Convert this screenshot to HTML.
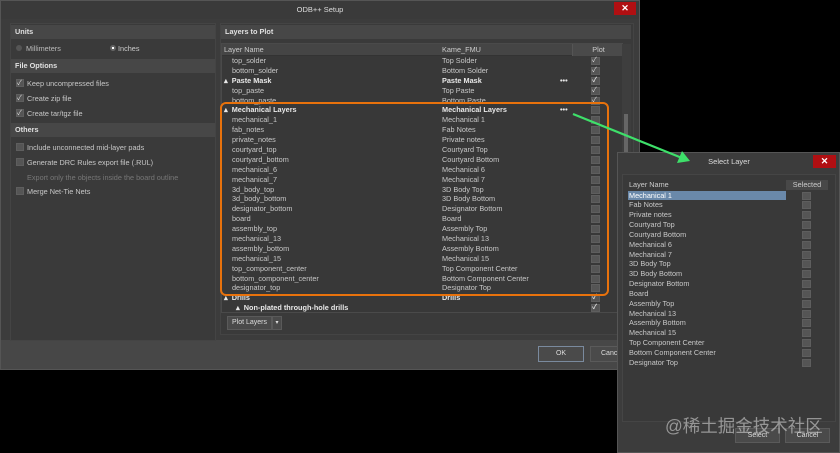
<!DOCTYPE html>
<html><head><meta charset="utf-8"><style>
*{margin:0;padding:0;box-sizing:border-box}
body{width:840px;height:453px;background:#000;position:relative;overflow:hidden;font-family:"Liberation Sans","Noto Sans CJK SC",sans-serif;font-size:7.3px;color:#c8c8c8}
.a{position:absolute}
.hdr{position:absolute;background:#474747;color:#e0e0e0;font-weight:bold;padding-left:4px;line-height:14px;font-size:7.3px}
.cb{position:absolute;width:8px;height:8px;background:#555;border:1px solid #5e5e5e}
.cb.c::after{content:"✓";position:absolute;left:0;top:-2px;font-size:7px;color:#ddd}
.row{height:9.9px;line-height:9.9px;position:relative;white-space:nowrap}
.row span{position:absolute}
.row .l{left:10px}.row .r{left:220px}
.row .k{left:369px;top:1px;width:9px;height:8px;background:#555;border:1px solid #5e5e5e}
.row .k.c::after{content:"✓";position:absolute;left:0;top:-2px;font-size:7px;color:#ddd;line-height:9px}
.b{font-weight:bold;color:#e8e8e8}
.srow{height:9.85px;line-height:9.85px;position:relative;padding-left:7px;white-space:nowrap}
.srow i{position:absolute;left:180px;top:1px;width:9px;height:8px;background:#555;border:1px solid #5e5e5e}
.btn{position:absolute;background:#4a4a4a;border:1px solid #5a5a5a;text-align:center;color:#ddd;font-size:7px}
</style></head><body>
<div class="a" style="left:0;top:0;width:640px;height:370px;background:#3c3c3c;border:1px solid #555"></div>
<div class="a" style="left:1px;top:1px;width:638px;height:18px;background:#3a3a3a;text-align:center;line-height:18px;color:#ddd;font-size:7.5px">ODB++ Setup</div>
<div class="a" style="left:614px;top:2px;width:22px;height:13px;background:#b00f12;color:#fff;text-align:center;line-height:13px;font-weight:bold;font-size:9px">✕</div>
<div class="a" style="left:1px;top:340px;width:638px;height:29px;background:#474747"></div>
<div class="a" style="left:10px;top:23px;width:206px;height:318px;background:#3a3a3a;border:1px solid #444"></div>
<div class="hdr" style="left:11px;top:25px;width:204px">Units</div>
<div class="a" style="left:16px;top:45px;width:6px;height:6px;border-radius:50%;background:#555"></div>
<div class="a" style="left:26px;top:44px;color:#bbb">Millimeters</div>
<div class="a" style="left:110px;top:45px;width:6px;height:6px;border-radius:50%;background:#444;border:2px solid #666"></div>
<div class="a" style="left:112px;top:47px;width:2px;height:2px;background:#fff"></div>
<div class="a" style="left:118px;top:44px;color:#ccc">Inches</div>
<div class="hdr" style="left:11px;top:59px;width:204px">File Options</div>
<div class="cb c" style="left:16px;top:79px"></div><div class="a" style="left:27px;top:79px">Keep uncompressed files</div>
<div class="cb c" style="left:16px;top:94px"></div><div class="a" style="left:27px;top:94px">Create zip file</div>
<div class="cb c" style="left:16px;top:109px"></div><div class="a" style="left:27px;top:109px">Create tar/tgz file</div>
<div class="hdr" style="left:11px;top:123px;width:204px">Others</div>
<div class="cb" style="left:16px;top:143px"></div><div class="a" style="left:27px;top:143px">Include unconnected mid-layer pads</div>
<div class="cb" style="left:16px;top:158px"></div><div class="a" style="left:27px;top:158px">Generate DRC Rules export file (.RUL)</div>
<div class="a" style="left:27px;top:173px;color:#777">Export only the objects inside the board outline</div>
<div class="cb" style="left:16px;top:187px"></div><div class="a" style="left:27px;top:187px">Merge Net-Tie Nets</div>
<div class="a" style="left:220px;top:23px;width:414px;height:312px;background:#3a3a3a;border:1px solid #444"></div>
<div class="hdr" style="left:221px;top:25px;width:410px">Layers to Plot</div>
<div class="a" style="left:221px;top:43px;width:402px;height:270px;background:#383838;border:1px solid #4a4a4a;overflow:hidden">
 <div style="height:12px;background:#454545;position:relative;line-height:12px;color:#ccc;border-bottom:1px solid #333">
  <span class="a" style="left:2px">Layer Name</span><span class="a" style="left:220px">Kame_FMU</span>
  <span class="a" style="left:350px;width:52px;text-align:center;border-left:1px solid #555;background:#4a4a4a">Plot</span>
 </div>
 <div class="row"><span class="l">top_solder</span><span class="r">Top Solder</span><span class="k c"></span></div>
 <div class="row"><span class="l">bottom_solder</span><span class="r">Bottom Solder</span><span class="k c"></span></div>
 <div class="row b"><span class="l" style="left:2px">▴&nbsp; Paste Mask</span><span class="r">Paste Mask</span><span style="left:338px">•••</span><span class="k c"></span></div>
 <div class="row"><span class="l">top_paste</span><span class="r">Top Paste</span><span class="k c"></span></div>
 <div class="row"><span class="l">bottom_paste</span><span class="r">Bottom Paste</span><span class="k c"></span></div>
 <div class="row b"><span class="l" style="left:2px">▴&nbsp; Mechanical Layers</span><span class="r">Mechanical Layers</span><span style="left:338px">•••</span><span class="k"></span></div>
 <div class="row"><span class="l">mechanical_1</span><span class="r">Mechanical 1</span><span class="k"></span></div>
 <div class="row"><span class="l">fab_notes</span><span class="r">Fab Notes</span><span class="k"></span></div>
 <div class="row"><span class="l">private_notes</span><span class="r">Private notes</span><span class="k"></span></div>
 <div class="row"><span class="l">courtyard_top</span><span class="r">Courtyard Top</span><span class="k"></span></div>
 <div class="row"><span class="l">courtyard_bottom</span><span class="r">Courtyard Bottom</span><span class="k"></span></div>
 <div class="row"><span class="l">mechanical_6</span><span class="r">Mechanical 6</span><span class="k"></span></div>
 <div class="row"><span class="l">mechanical_7</span><span class="r">Mechanical 7</span><span class="k"></span></div>
 <div class="row"><span class="l">3d_body_top</span><span class="r">3D Body Top</span><span class="k"></span></div>
 <div class="row"><span class="l">3d_body_bottom</span><span class="r">3D Body Bottom</span><span class="k"></span></div>
 <div class="row"><span class="l">designator_bottom</span><span class="r">Designator Bottom</span><span class="k"></span></div>
 <div class="row"><span class="l">board</span><span class="r">Board</span><span class="k"></span></div>
 <div class="row"><span class="l">assembly_top</span><span class="r">Assembly Top</span><span class="k"></span></div>
 <div class="row"><span class="l">mechanical_13</span><span class="r">Mechanical 13</span><span class="k"></span></div>
 <div class="row"><span class="l">assembly_bottom</span><span class="r">Assembly Bottom</span><span class="k"></span></div>
 <div class="row"><span class="l">mechanical_15</span><span class="r">Mechanical 15</span><span class="k"></span></div>
 <div class="row"><span class="l">top_component_center</span><span class="r">Top Component Center</span><span class="k"></span></div>
 <div class="row"><span class="l">bottom_component_center</span><span class="r">Bottom Component Center</span><span class="k"></span></div>
 <div class="row"><span class="l">designator_top</span><span class="r">Designator Top</span><span class="k"></span></div>
 <div class="row b"><span class="l" style="left:2px">▴&nbsp; Drills</span><span class="r">Drills</span><span class="k c"></span></div>
 <div class="row b"><span class="l" style="left:14px">▴&nbsp; Non-plated through-hole drills</span><span class="k c"></span></div>
</div>
<div class="a" style="left:622px;top:44px;width:9px;height:268px;background:#3e3e3e"></div>
<div class="a" style="left:624px;top:114px;width:4px;height:40px;background:#666"></div>
<div class="btn" style="left:227px;top:316px;width:45px;height:14px;line-height:12px">Plot Layers</div>
<div class="btn" style="left:272px;top:316px;width:10px;height:14px;line-height:12px;font-size:6px">▾</div>
<div class="btn" style="left:538px;top:346px;width:46px;height:16px;line-height:14px;border-color:#7a8a9e">OK</div>
<div class="btn" style="left:590px;top:346px;width:46px;height:16px;line-height:14px;text-align:left;padding-left:10px;overflow:hidden">Cancel</div>
<div class="a" style="left:220px;top:102px;width:389px;height:194px;border:2.5px solid #e8720c;border-radius:6px"></div>
<div class="a" style="left:617px;top:152px;width:223px;height:301px;background:#3c3c3c;border:1px solid #555"></div>
<div class="a" style="left:618px;top:153px;width:222px;height:18px;text-align:center;line-height:18px;color:#ddd;font-size:7.5px">Select Layer</div>
<div class="a" style="left:813px;top:155px;width:23px;height:13px;background:#b00f12;color:#fff;text-align:center;line-height:13px;font-weight:bold;font-size:9px">✕</div>
<div class="a" style="left:622px;top:174px;width:214px;height:248px;background:#393939;border:1px solid #454545"></div>
<div class="a" style="left:627px;top:180px;width:159px;height:10px;line-height:10px;color:#ccc;padding-left:2px">Layer Name</div>
<div class="a" style="left:786px;top:180px;width:42px;height:10px;line-height:10px;background:#484848;text-align:center;color:#ccc">Selected</div>
<div class="a" style="left:628px;top:191px;width:158px;height:9px;background:#6a89aa"></div>
<div class="a" style="left:622px;top:190.5px;width:214px">
 <div class="srow" style="color:#fff">Mechanical 1<i></i></div>
 <div class="srow">Fab Notes<i></i></div>
 <div class="srow">Private notes<i></i></div>
 <div class="srow">Courtyard Top<i></i></div>
 <div class="srow">Courtyard Bottom<i></i></div>
 <div class="srow">Mechanical 6<i></i></div>
 <div class="srow">Mechanical 7<i></i></div>
 <div class="srow">3D Body Top<i></i></div>
 <div class="srow">3D Body Bottom<i></i></div>
 <div class="srow">Designator Bottom<i></i></div>
 <div class="srow">Board<i></i></div>
 <div class="srow">Assembly Top<i></i></div>
 <div class="srow">Mechanical 13<i></i></div>
 <div class="srow">Assembly Bottom<i></i></div>
 <div class="srow">Mechanical 15<i></i></div>
 <div class="srow">Top Component Center<i></i></div>
 <div class="srow">Bottom Component Center<i></i></div>
 <div class="srow">Designator Top<i></i></div>
</div>
<div class="btn" style="left:735px;top:428px;width:45px;height:15px;line-height:13px">Select</div>
<div class="btn" style="left:785px;top:428px;width:45px;height:15px;line-height:13px">Cancel</div>
<div class="a" style="left:665px;top:413px;font-size:17.5px;color:rgba(210,210,210,0.6);white-space:nowrap">@稀土掘金技术社区</div>
<svg class="a" style="left:0;top:0" width="840" height="453"><line x1="573" y1="114" x2="682" y2="158" stroke="#3ee06a" stroke-width="2.2"/><polygon points="690,161 677,163 682,151" fill="#3ee06a"/></svg>
</body></html>
